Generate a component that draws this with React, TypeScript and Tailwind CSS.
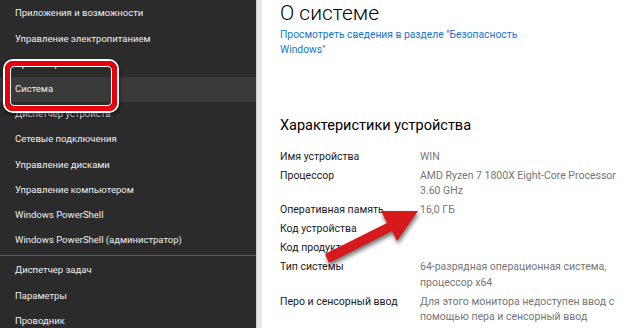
import React from "react";

const items1 = [
  "Приложения и возможности",
  "Управление электропитанием",
  "Просмотр событий",
  "Система",
  "Диспетчер устройств",
  "Сетевые подключения",
  "Управление дисками",
  "Управление компьютером",
  "Windows PowerShell",
  "Windows PowerShell (администратор)",
];
const items2 = ["Диспетчер задач", "Параметры", "Проводник"];

const rows: [string, string[]][] = [
  ["Имя устройства", ["WIN"]],
  ["Процессор", ["AMD Ryzen 7 1800X Eight-Core Processor", "3.60 GHz"]],
  ["Оперативная память", ["16,0 ГБ"]],
  ["Код устройства", []],
  ["Код продукта", []],
  ["Тип системы", ["64-разрядная операционная система,", "процессор x64"]],
  ["Перо и сенсорный ввод", ["Для этого монитора недоступен ввод с", "помощью пера и сенсорный ввод"]],
];

export default function App() {
  return (
    <div
      className="relative w-[640px] h-[328px] overflow-hidden flex bg-white"
      style={{ fontFamily: 'Roboto, "Noto Sans", sans-serif' }}
    >
      <div className="w-[256px] h-full bg-[#2b2b2b] flex flex-col pt-[1px] shrink-0">
        {items1.map((t) => (
          <div
            key={t}
            className={`h-[25.2px] shrink-0 flex items-center pl-[15px] text-[9.5px] text-[#f0f0f0] ${
              t === "Система" ? "bg-[#3a3a3a]" : ""
            }`}
          >
            {t}
          </div>
        ))}
        <div className="h-[5px] shrink-0 flex items-center">
          <div className="w-full h-[1px] bg-[#5a5a5a]" />
        </div>
        {items2.map((t) => (
          <div key={t} className="h-[25.2px] shrink-0 flex items-center pl-[15px] text-[9.5px] text-[#f0f0f0]">
            {t}
          </div>
        ))}
      </div>
      <div className="w-[6px] h-full bg-[#e6e6e6] border-l border-[#cfcfcf] shrink-0" />
      <div className="flex-1 pl-[18px] text-[#000]">
        <div className="text-[21px] font-light leading-[26px] mt-[0px]">О системе</div>
        <div className="text-[10.3px] leading-[15px] text-[#1574cf] mt-[1px]">
          Просмотреть сведения в разделе "Безопасность
          <br />
          Windows"
        </div>
        <div className="text-[14.5px] leading-[20px] mt-[59px]">Характеристики устройства</div>
        <div className="mt-[12.5px] flex flex-col gap-[3.5px]">
          {rows.map(([k, v]) => (
            <div key={k} className="flex text-[10.5px] leading-[15.5px]">
              <div className="w-[140px] shrink-0 text-[#1a1a1a]">{k}</div>
              <div className="text-[#767676] whitespace-nowrap">
                {v.map((l) => (
                  <div key={l}>{l}</div>
                ))}
              </div>
            </div>
          ))}
        </div>
      </div>

      {/* red highlight box */}
      <div className="absolute left-[3px] top-[59px] w-[116px] h-[54px] rounded-[10px] border-[2px] border-white shadow-[0_2px_4px_rgba(0,0,0,0.6)]">
        <div className="w-full h-full rounded-[8px] border-[5px] border-[#e5000b]">
          <div className="w-full h-full rounded-[4px] border border-white" />
        </div>
      </div>

      {/* arrow */}
      <svg
        className="absolute left-0 top-0"
        width="640"
        height="328"
        style={{ filter: "drop-shadow(1px 3px 2px rgba(0,0,0,0.55))" }}
      >
        <polygon
          points="325,254 387,223 381,211 418,211 397,241 392,231 329,263"
          fill="#d7191c"
        />
      </svg>
    </div>
  );
}
